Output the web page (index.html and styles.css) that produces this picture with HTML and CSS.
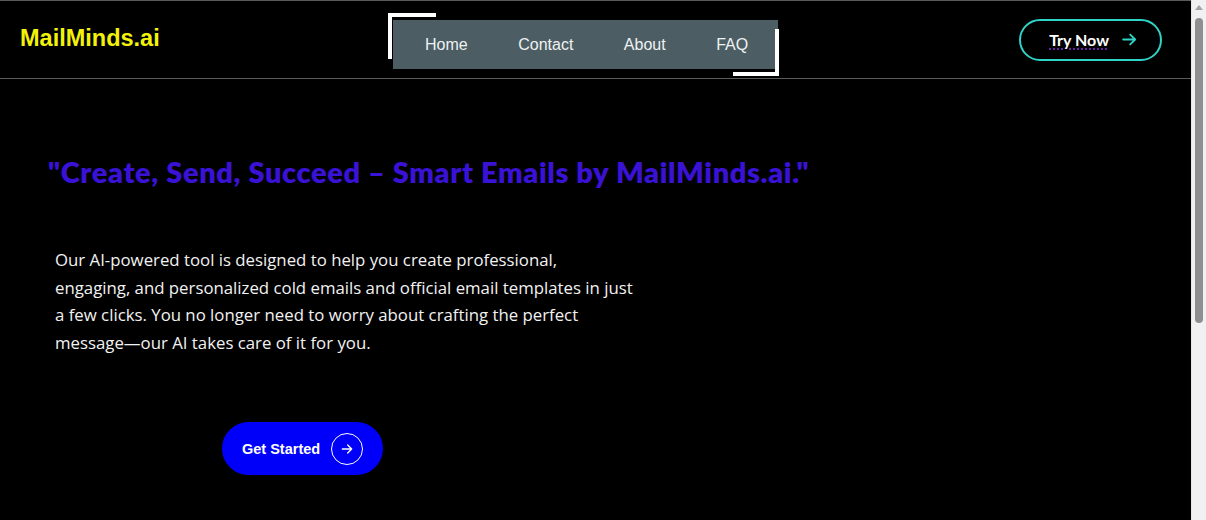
FILE: index.html
```html
<!DOCTYPE html>
<html lang="en">
<head>
<meta charset="utf-8">
<title>MailMinds.ai</title>
<link rel="stylesheet" href="styles.css">
</head>
<body>
<header class="header">
  <div class="logo">MailMinds.ai</div>
  <nav class="nav">
    <span class="corner corner-tl"></span>
    <span class="corner corner-br"></span>
    <a class="nav-link" href="#">Home</a>
    <a class="nav-link" href="#">Contact</a>
    <a class="nav-link" href="#">About</a>
    <a class="nav-link" href="#">FAQ</a>
  </nav>
  <a class="try-btn" href="#"><span class="try-text">Try Now</span>
    <svg class="try-arrow" width="17" height="17" viewBox="0 0 24 24" fill="none" stroke="currentColor" stroke-width="2.6" stroke-linecap="round" stroke-linejoin="round"><path d="M3 12h17M13 5l7 7-7 7"/></svg>
  </a>
</header>
<main class="hero">
  <h1 class="title">"Create, Send, Succeed – Smart Emails by MailMinds.ai."</h1>
  <p class="lead">Our AI-powered tool is designed to help you create professional,<br>engaging, and personalized cold emails and official email templates in just a few clicks. You no longer need to worry about crafting the perfect message—our AI takes care of it for you.</p>
  <div class="cta-row">
    <a class="start-btn" href="#">Get Started
      <span class="start-icon"><svg width="16" height="16" viewBox="0 0 24 24" fill="none" stroke="currentColor" stroke-width="2" stroke-linecap="round" stroke-linejoin="round"><path d="M5 12h14M13 6l6 6-6 6"/></svg></span>
    </a>
  </div>
</main>
<div class="scrollbar" aria-hidden="true">
  <span class="scroll-up"></span>
  <span class="scroll-thumb"></span>
</div>
</body>
</html>
```
FILE: styles.css
```css
html, body {
  margin: 0;
  padding: 0;
  background: #000;
}
body {
  min-height: 840px;
  padding-right: 15px;
  font-family: "Liberation Sans", Arial, sans-serif;
  color: #fff;
}
a { text-decoration: none; color: inherit; }

.header {
  display: flex;
  align-items: center;
  height: 77px;
  border-top: 1px solid #5a5a5a;
  border-bottom: 1px solid #5a5a5a;
  padding: 0 29px 0 20px;
}
.logo {
  color: #f2f20a;
  font-weight: bold;
  font-size: 23.5px;
  margin-top: -3px;
  width: 373px;
}
.nav {
  position: relative;
  display: flex;
  align-items: center;
  background: #4c5d63;
  height: 49px;
  width: 385px;
  box-sizing: border-box;
  padding: 0 0 0 32px;
  margin-top: 10px;
  margin-right: auto;
}
.nav-link {
  color: #eef2f2;
  font-size: 16px;
  margin-right: 50.5px;
}
.nav-link:last-child { margin-right: 0; }
.corner {
  position: absolute;
  border: 0 solid #fff;
}
.corner-tl {
  left: -5px;
  top: -7px;
  width: 44px;
  height: 42px;
  border-top-width: 4px;
  border-left-width: 4px;
}
.corner-br {
  right: -1px;
  bottom: -7px;
  width: 42px;
  height: 43px;
  border-bottom-width: 4px;
  border-right-width: 4px;
}
.try-btn {
  display: flex;
  align-items: center;
  gap: 12px;
  height: 38px;
  padding: 0 22px 0 28px;
  border: 2px solid #2ed3c6;
  border-radius: 22px;
}
.try-text {
  color: #fff;
  font-family: "Lato", sans-serif;
  font-weight: bold;
  font-size: 16px;
  text-decoration: underline dotted;
  text-decoration-color: #7a2ad0;
  text-underline-offset: 3px;
}
.try-arrow { color: #2ed3c6; }

.hero {
  padding: 75px 0 0 48px;
}
.title {
  margin: 0;
  font-family: "Lato", sans-serif;
  font-weight: 800;
  font-size: 29px;
  letter-spacing: 0.62px;
  color: #3a12d6;
}
.lead {
  margin: 57px 0 0 7px;
  max-width: 586px;
  font-family: "Open Sans", sans-serif;
  font-size: 16.8px;
  line-height: 27.5px;
  color: #f2f2f2;
}
.cta-row {
  display: flex;
  padding: 66px 0 0 174px;
}
.start-btn {
  display: flex;
  align-items: center;
  gap: 11px;
  height: 53px;
  padding: 0 20px;
  background: #0000fa;
  border-radius: 27px;
  color: #fff;
  font-weight: bold;
  font-size: 14.5px;
}
.start-icon {
  display: flex;
  align-items: center;
  justify-content: center;
  width: 30px;
  height: 30px;
  border: 1.5px solid #fff;
  border-radius: 50%;
}

.scrollbar {
  position: fixed;
  top: 0;
  right: 0;
  width: 15px;
  height: 100vh;
  background: #f1f1f1;
  border-left: 1px solid #e6e6e6;
  box-sizing: border-box;
}
.scroll-up {
  position: absolute;
  top: 5px;
  left: 3px;
  width: 0;
  height: 0;
  border-left: 4px solid transparent;
  border-right: 4px solid transparent;
  border-bottom: 5px solid #a3a3a3;
}
.scroll-thumb {
  position: absolute;
  top: 18px;
  left: 3px;
  width: 8px;
  height: 305px;
  border-radius: 4px;
  background: #8f8f8f;
}
```
